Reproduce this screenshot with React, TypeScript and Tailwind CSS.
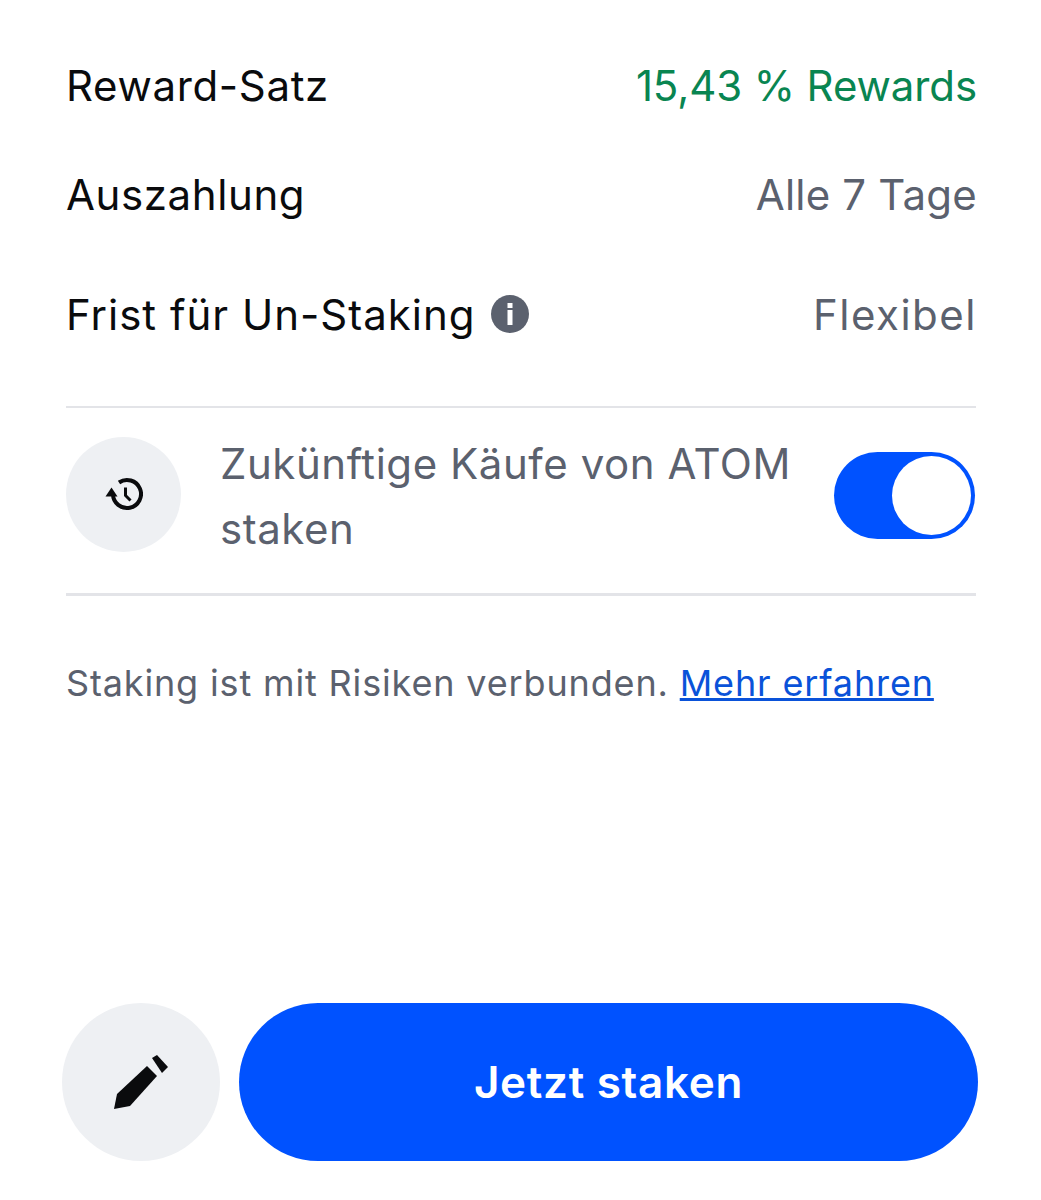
const font = "font-['Inter','Liberation_Sans',sans-serif]";

function Row({ label, value, labelClass, valueClass, info }: { label: string; value: string; labelClass: string; valueClass: string; info?: boolean }) {
  return (
    <div className="flex items-center justify-between h-[60px]">
      <div className="flex items-center gap-[15px] text-[42px] text-[#0a0b0d]">
        <span className={labelClass}>{label}</span>
        {info && (
          <svg width="38" height="38" viewBox="0 0 38 38">
            <circle cx="19" cy="19" r="19" fill="#5b616e" />
            <rect x="16.5" y="8" width="5" height="5" fill="#fff" />
            <rect x="16.5" y="15" width="5" height="15" fill="#fff" />
          </svg>
        )}
      </div>
      <span className={`text-[42px] -mr-[1px] ${valueClass}`}>{value}</span>
    </div>
  );
}

export default function App() {
  return (
    <div className={`${font} w-[1041px] h-[1200px] bg-white flex flex-col`}>
      <div className="pl-[66px] pr-[65px] pt-[55px]">
        <Row label="Reward-Satz" value="15,43 % Rewards" labelClass="tracking-[0.65px]" valueClass="tracking-[-0.1px] text-[#098551]" />
        <div className="mt-[49px]">
          <Row label="Auszahlung" value="Alle 7 Tage" labelClass="tracking-[0.6px]" valueClass="tracking-[0.2px] text-[#5b616e]" />
        </div>
        <div className="mt-[60px]">
          <Row label="Frist für Un-Staking" value="Flexibel" labelClass="tracking-[1px]" valueClass="tracking-[1.5px] text-[#5b616e]" info />
        </div>

        <div className="mt-[62px] border-t-2 border-b-[3px] border-[#e3e4e8] h-[190px] pb-[13px] flex items-center">
          <div className="w-[115px] h-[115px] rounded-full bg-[#eef0f3] flex items-center justify-center shrink-0">
            <svg width="38" height="36" viewBox="0 0 38 36" fill="none">
              <path d="M14 6.5 A14 14 0 1 1 8 18" stroke="#0a0b0d" strokeWidth="4" />
              <path d="M0.5 20.5 L6.5 11.5 L12.5 20.5 Z" fill="#0a0b0d" />
              <path d="M20.5 11.5 V19.5 L25.5 24.5" stroke="#0a0b0d" strokeWidth="3" />
            </svg>
          </div>
          <div className="ml-[39px] mt-[3px] w-[590px] text-[42px] leading-[65px] tracking-[0.55px] text-[#5b616e]">
            Zukünftige Käufe von ATOM staken
          </div>
          <div className="ml-auto mr-[1px] mt-[2px] w-[141px] h-[87px] rounded-full bg-[#0052ff] flex items-center justify-end pr-[4px]">
            <div className="w-[79px] h-[79px] rounded-full bg-white" />
          </div>
        </div>

        <p className="mt-[61px] text-[36px] leading-[52px] tracking-[0.85px] text-[#5b616e]">
          Staking ist mit Risiken verbunden.{" "}
          <a href="#" className="text-[#0a52d9] underline">Mehr erfahren</a>
        </p>
      </div>

      <div className="mt-auto mb-[39px] ml-[62px] mr-[63px] flex items-center gap-[19px]">
        <button className="w-[158px] h-[158px] rounded-full bg-[#eef0f3] flex items-center justify-center shrink-0">
          <svg width="56" height="56" viewBox="0 0 56 56">
            <path d="M1 55 L4 40 L34 12 L44 22 L17 52 Z" fill="#0a0b0d" />
            <path d="M39 4 L44 1 L55 13 L49 19 Z" fill="#0a0b0d" />
          </svg>
        </button>
        <button className="flex-1 h-[158px] rounded-full bg-[#0052ff] text-white text-[44px] tracking-[0.7px] font-semibold">
          Jetzt staken
        </button>
      </div>
    </div>
  );
}
